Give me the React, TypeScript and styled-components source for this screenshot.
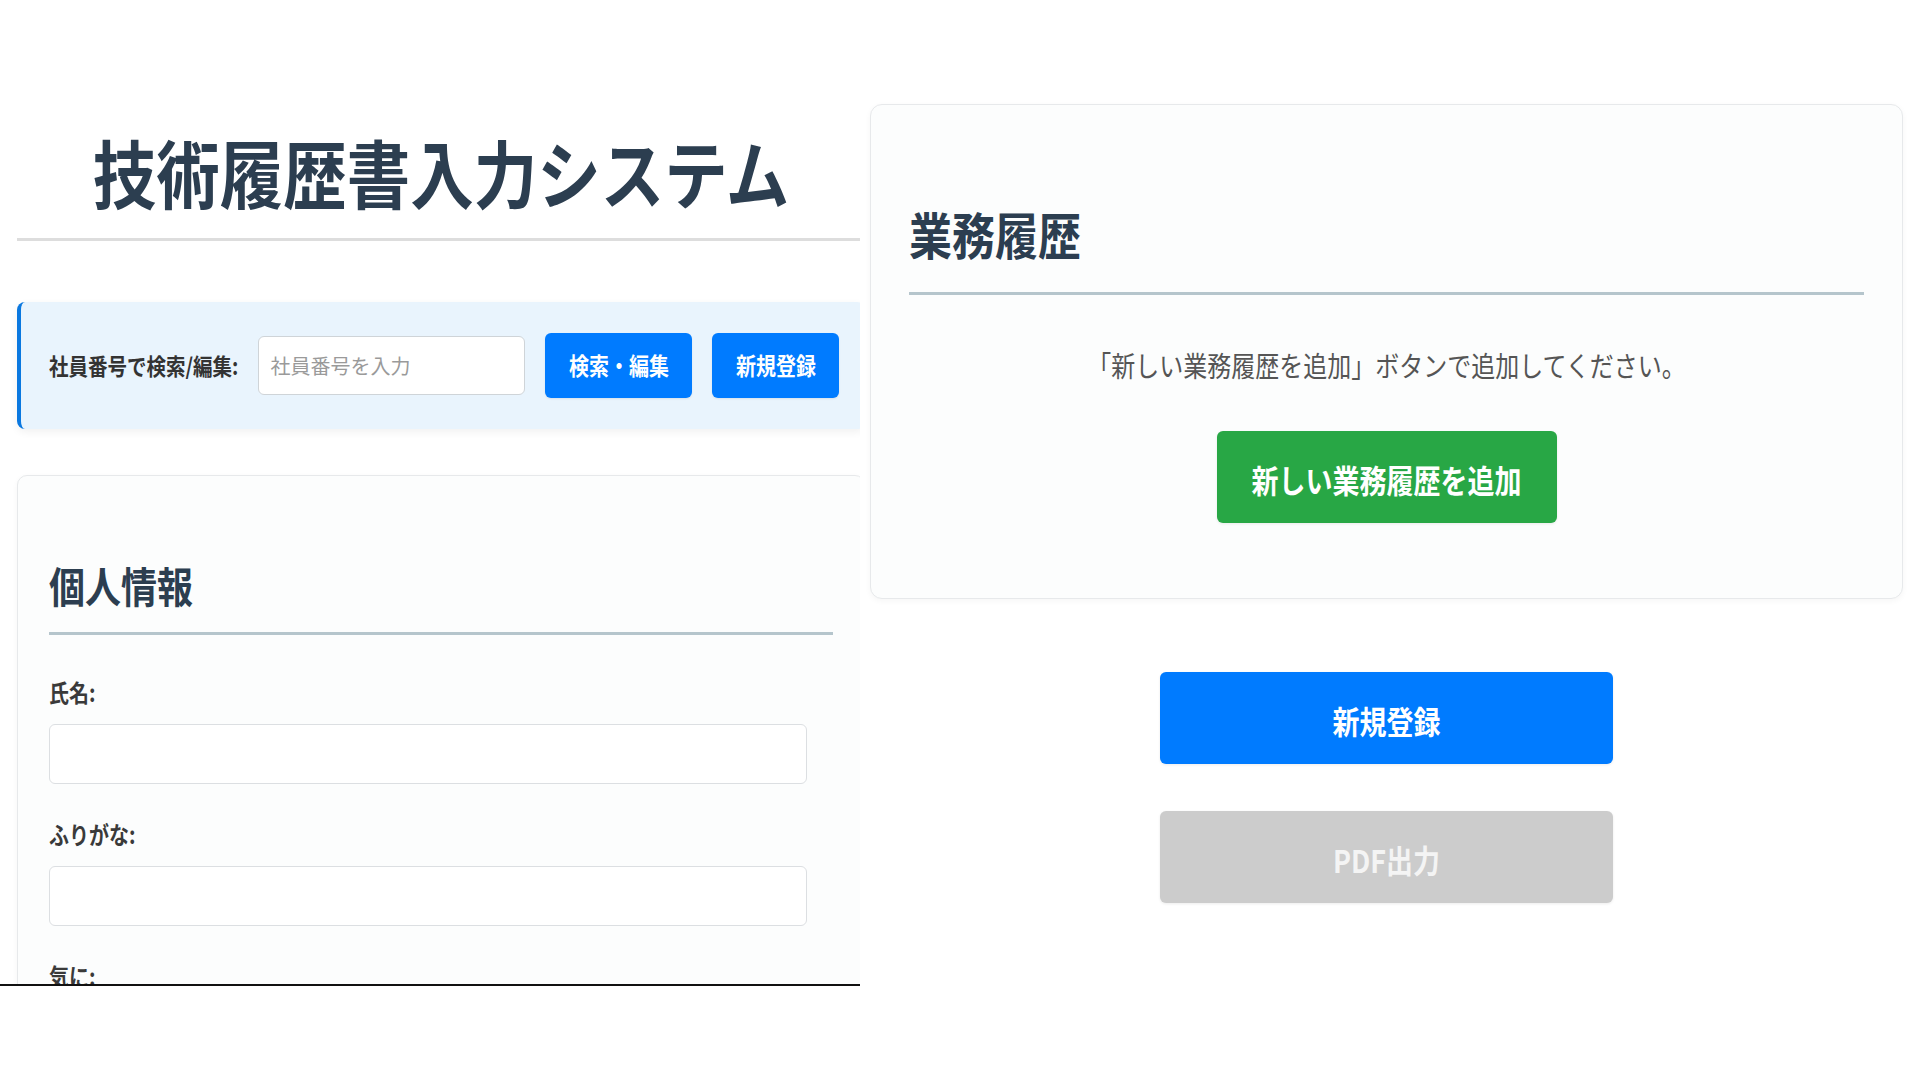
import React from "react";
import styled, { createGlobalStyle } from "styled-components";

const Global = createGlobalStyle`
  html, body {
    margin: 0;
    padding: 0;
    background: #ffffff;
  }
  body {
    font-family: "Noto Sans CJK JP", "Noto Sans", "Liberation Sans", sans-serif;
    color: #333;
  }
  * { box-sizing: border-box; }
`;

const Page = styled.div`
  display: flex;
  align-items: flex-start;
  width: 1920px;
  height: 1080px;
  overflow: hidden;
  background: #ffffff;
`;

const LeftPane = styled.section`
  flex: 0 0 860px;
  width: 860px;
  height: 986px;
  border-bottom: 2px solid #111;
  overflow: hidden;
`;

const LeftInner = styled.div`
  width: 848px;
  margin-left: 17px;
  padding-top: 129px;
`;

const Stretch = styled.span`
  display: inline-block;
  transform: scaleY(1.17);
`;

const Title = styled.h1`
  margin: 0;
  text-align: center;
  font-size: 63.5px;
  line-height: 82px;
  font-weight: 700;
  color: #2c3e50;
  padding-bottom: 27px;
  border-bottom: 3px solid #dddddd;
`;

const SearchBar = styled.div`
  margin-top: 61px;
  display: flex;
  align-items: center;
  gap: 20px;
  padding: 31px 20px 31px 28px;
  background: #e9f4fd;
  border-left: 4px solid #0a78e0;
  border-radius: 8px;
  box-shadow: 0 3px 8px rgba(0, 0, 0, 0.06);
`;

const SearchLabel = styled.label`
  font-size: 19.5px;
  font-weight: 700;
  color: #333;
  white-space: nowrap;
`;

const SearchInput = styled.input`
  width: 267px;
  height: 59px;
  padding: 0 11px;
  font-family: inherit;
  font-size: 20px;
  border: 1px solid #cfd4d8;
  border-radius: 6px;
  background: #fff;
  outline: none;
  &::placeholder {
    color: #9a9a9a;
  }
`;

const SmallButton = styled.button`
  height: 65px;
  padding: 0 23.5px;
  border: none;
  border-radius: 6px;
  background: #007bff;
  color: #fff;
  font-family: inherit;
  font-size: 20px;
  font-weight: 700;
  white-space: nowrap;
  cursor: pointer;
  box-shadow: 0 1px 2px rgba(0, 0, 0, 0.08);
`;

const Card = styled.div`
  background: #fcfdfd;
  border: 1px solid #e7e9eb;
  box-shadow: 0 2px 6px rgba(0, 0, 0, 0.04);
`;

const PersonalCard = styled(Card)`
  margin-top: 46px;
  border-radius: 10px;
  padding: 87px 31px 40px;
`;

const SectionTitle = styled.h2<{ $size: number; $gap: number }>`
  margin: 0;
  font-size: ${(p) => p.$size}px;
  line-height: ${(p) => Math.round(p.$size * 1.2)}px;
  font-weight: 700;
  color: #2c3e50;
  padding-bottom: ${(p) => p.$gap}px;
  border-bottom: 3px solid #b5c5cc;
`;

const Field = styled.div`
  display: flex;
  flex-direction: column;
  align-items: flex-start;
`;

const FieldLabel = styled.label<{ $top: number }>`
  margin-top: ${(p) => p.$top}px;
  font-size: 20px;
  line-height: 24px;
  font-weight: 700;
  color: #3a3a3a;
`;

const FieldInput = styled.input`
  margin-top: 19px;
  width: 758px;
  height: 60px;
  padding: 0 12px;
  font-family: inherit;
  font-size: 20px;
  border: 1px solid #dcdfe2;
  border-radius: 6px;
  background: #fff;
  outline: none;
`;

const RightPane = styled.section`
  flex: 1;
  display: flex;
  flex-direction: column;
  align-items: center;
  padding: 104px 17px 0 10px;
`;

const WorkCard = styled(Card)`
  align-self: stretch;
  border-radius: 12px;
  padding: 102px 38px 75px;
  display: flex;
  flex-direction: column;
  align-items: stretch;
`;

const Message = styled.p`
  margin: 52px 0 0;
  text-align: center;
  font-size: 24px;
  line-height: 36px;
  color: #555;
`;

const BigButton = styled.button<{ $tone: "green" | "blue" | "gray"; $width?: number; $top: number }>`
  align-self: center;
  margin-top: ${(p) => p.$top}px;
  height: 92px;
  width: ${(p) => (p.$width ? `${p.$width}px` : "auto")};
  padding: 4px 35px 0;
  border: none;
  border-radius: 6px;
  font-family: inherit;
  font-size: 27px;
  font-weight: 700;
  white-space: nowrap;
  cursor: pointer;
  background: ${(p) =>
    p.$tone === "green" ? "#28a745" : p.$tone === "blue" ? "#007bff" : "#cccccc"};
  color: ${(p) => (p.$tone === "gray" ? "#f4f4f4" : "#ffffff")};
  box-shadow: 0 1px 3px rgba(0, 0, 0, 0.08);
`;

export default function App() {
  return (
    <>
      <Global />
      <Page>
        <LeftPane>
          <LeftInner>
            <Title>
              <Stretch>技術履歴書入力システム</Stretch>
            </Title>
            <SearchBar>
              <SearchLabel>
                <Stretch>社員番号で検索/編集:</Stretch>
              </SearchLabel>
              <SearchInput placeholder="社員番号を入力" />
              <SmallButton>
                <Stretch>検索・編集</Stretch>
              </SmallButton>
              <SmallButton>
                <Stretch>新規登録</Stretch>
              </SmallButton>
            </SearchBar>
            <PersonalCard>
              <SectionTitle $size={36} $gap={26}>
                <Stretch>個人情報</Stretch>
              </SectionTitle>
              <Field>
                <FieldLabel $top={46}>
                  <Stretch>氏名:</Stretch>
                </FieldLabel>
                <FieldInput />
              </Field>
              <Field>
                <FieldLabel $top={39}>
                  <Stretch>ふりがな:</Stretch>
                </FieldLabel>
                <FieldInput />
              </Field>
              <Field>
                <FieldLabel $top={39}>
                  <Stretch>気に:</Stretch>
                </FieldLabel>
                <FieldInput />
              </Field>
            </PersonalCard>
          </LeftInner>
        </LeftPane>
        <RightPane>
          <WorkCard>
            <SectionTitle $size={43} $gap={33}>
              <Stretch>業務履歴</Stretch>
            </SectionTitle>
            <Message>
              <Stretch>「新しい業務履歴を追加」ボタンで追加してください。</Stretch>
            </Message>
            <BigButton $tone="green" $top={48}>
              <Stretch>新しい業務履歴を追加</Stretch>
            </BigButton>
          </WorkCard>
          <BigButton $tone="blue" $width={453} $top={73}>
            <Stretch>新規登録</Stretch>
          </BigButton>
          <BigButton $tone="gray" $width={453} $top={47}>
            <Stretch>PDF出力</Stretch>
          </BigButton>
        </RightPane>
      </Page>
    </>
  );
}
